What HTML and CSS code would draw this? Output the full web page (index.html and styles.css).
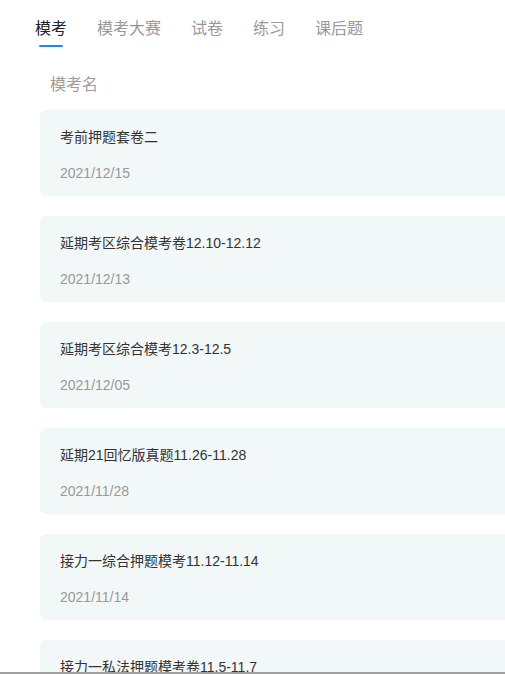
FILE: index.html
```html
<!DOCTYPE html>
<html lang="zh-CN">
<head>
    <meta charset="UTF-8">
    <meta name="viewport" content="width=device-width, initial-scale=1.0">
    <title>模考</title>
    <link rel="stylesheet" href="styles.css">
</head>
<body>
<nav class="tabs">
    <a class="tab active">模考</a>
    <a class="tab">模考大赛</a>
    <a class="tab">试卷</a>
    <a class="tab">练习</a>
    <a class="tab">课后题</a>
</nav>

<div class="list-head">模考名</div>

<ul class="exam-list">
    <li class="exam-card">
        <div class="exam-title">考前押题套卷二</div>
        <div class="exam-date">2021/12/15</div>
    </li>
    <li class="exam-card">
        <div class="exam-title">延期考区综合模考卷12.10-12.12</div>
        <div class="exam-date">2021/12/13</div>
    </li>
    <li class="exam-card">
        <div class="exam-title">延期考区综合模考12.3-12.5</div>
        <div class="exam-date">2021/12/05</div>
    </li>
    <li class="exam-card">
        <div class="exam-title">延期21回忆版真题11.26-11.28</div>
        <div class="exam-date">2021/11/28</div>
    </li>
    <li class="exam-card">
        <div class="exam-title">接力一综合押题模考11.12-11.14</div>
        <div class="exam-date">2021/11/14</div>
    </li>
    <li class="exam-card">
        <div class="exam-title">接力一私法押题模考卷11.5-11.7</div>
        <div class="exam-date">2021/11/07</div>
    </li>
</ul>

<div class="bottom-rule"></div>
</body>
</html>
```

FILE: styles.css
```css
:root {
    --text-color: #333;
    --muted-color: #999;
    --accent-color: #1e88e5;
    --card-bg: #f2f7f7;
}

html {
    overflow-x: hidden;
}

body {
    margin: 0;
    font-family: "Liberation Sans", "Noto Sans CJK SC", sans-serif;
    color: var(--text-color);
    background-color: #fff;
}

.tabs {
    display: flex;
    gap: 30px;
    padding: 19px 0 0 35px;
}

.tab {
    display: flex;
    flex-direction: column;
    font-size: 16px;
    line-height: 20px;
    color: #999;
    cursor: pointer;
}

.tab.active {
    color: #222;
}

.tab.active::after {
    content: "";
    display: block;
    width: 24px;
    height: 2px;
    margin: 6px auto 0;
    background-color: var(--accent-color);
    border-radius: 1px;
}

.list-head {
    margin-top: 28px;
    padding-left: 50px;
    font-size: 16px;
    line-height: 20px;
    color: #a09b98;
}

.exam-list {
    list-style: none;
    margin: 15px -20px 0 40px;
    padding: 0;
    display: flex;
    flex-direction: column;
    gap: 20px;
}

.exam-card {
    background-color: var(--card-bg);
    border-radius: 6px;
    padding: 17px 20px 13px;
}

.exam-title {
    font-size: 14px;
    line-height: 20px;
    color: var(--text-color);
}

.exam-date {
    margin-top: 16px;
    font-size: 14px;
    line-height: 20px;
    color: var(--muted-color);
}

.bottom-rule {
    position: fixed;
    left: 0;
    right: 0;
    bottom: 0;
    height: 2px;
    background-color: #a0a0a0;
}
```
